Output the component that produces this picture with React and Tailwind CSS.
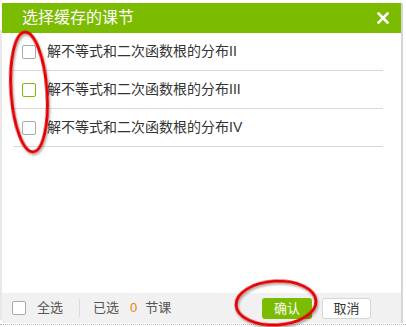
import React from "react";

const rows = ["解不等式和二次函数根的分布II", "解不等式和二次函数根的分布III", "解不等式和二次函数根的分布IV"];

export default function App() {
  return (
    <div className="relative w-[406px] h-[327px] bg-white overflow-hidden" style={{ fontFamily: '"Liberation Sans", "Noto Sans CJK SC", sans-serif' }}>
      <div className="absolute left-0 top-[30px] w-[2px] h-[290px] bg-[#e8e8e8]" />
      <div className="absolute left-[2px] top-[3px] w-[401px] h-[320px] border-r-2 border-[#d6d6d6] bg-white flex flex-col">
        <div className="h-[30px] bg-[#7bbc00] flex items-center justify-between pl-[20px] pr-[12px] shrink-0">
          <span className="text-white text-[16px] leading-none">选择缓存的课节</span>
          <svg width="12" height="12" viewBox="0 0 12 12">
            <path d="M1.5 1.5 L10.5 10.5 M10.5 1.5 L1.5 10.5" stroke="white" strokeWidth="2.6" strokeLinecap="square" />
          </svg>
        </div>
        <div className="flex-1 flex flex-col pl-[11px] pr-[18px]">
          {rows.map((r, i) => (
            <div key={i} className="h-[38px] flex items-center border-b border-[#d9d9d9] pl-[9px]">
              <span className={"w-[14px] h-[14px] rounded-[2px] border bg-white " + (i === 1 ? "border-[#7bbc00]" : "border-[#aaaaaa]")} />
              <span className="ml-[11px] text-[14px] text-[#333]">{r}</span>
            </div>
          ))}
        </div>
        <div className="h-[30px] bg-[#f1f1f1] flex items-center pl-[10px] pr-[30px] shrink-0">
          <span className="w-[14px] h-[14px] rounded-[2px] border border-[#aaaaaa] bg-white" />
          <span className="ml-[11px] text-[13px] text-[#555]">全选</span>
          <span className="ml-[16px] w-px h-[18px] bg-[#dcdcdc]" />
          <span className="ml-[13px] text-[13px] text-[#555]">已选</span>
          <span className="ml-[11px] text-[13px] text-[#e8820c]">0</span>
          <span className="ml-[8px] text-[13px] text-[#555]">节课</span>
          <div className="flex-1" />
          <button className="w-[50px] h-[21px] bg-[#7bbc00] text-white text-[13px] rounded-[3px] leading-none">确认</button>
          <button className="ml-[10px] w-[49px] h-[21px] bg-white border border-[#d6d6d6] text-[#333] text-[13px] rounded-[3px] leading-none">取消</button>
        </div>
      </div>
      <div className="absolute left-0 top-[324px] w-[406px] border-t border-dotted border-[#bbbbbb]" />
      <svg className="absolute left-0 top-0 pointer-events-none" width="406" height="327">
        <defs>
          <filter id="sh" x="-20%" y="-20%" width="140%" height="140%">
            <feDropShadow dx="1" dy="2" stdDeviation="1.2" floodColor="#000" floodOpacity="0.35" />
          </filter>
        </defs>
        <ellipse cx="29" cy="92" rx="18" ry="60" transform="rotate(-4 29 92)" fill="none" stroke="#e30000" strokeWidth="3" filter="url(#sh)" />
        <ellipse cx="276" cy="303" rx="40" ry="22" transform="rotate(-3 276 303)" fill="none" stroke="#e30000" strokeWidth="3" filter="url(#sh)" />
      </svg>
    </div>
  );
}
